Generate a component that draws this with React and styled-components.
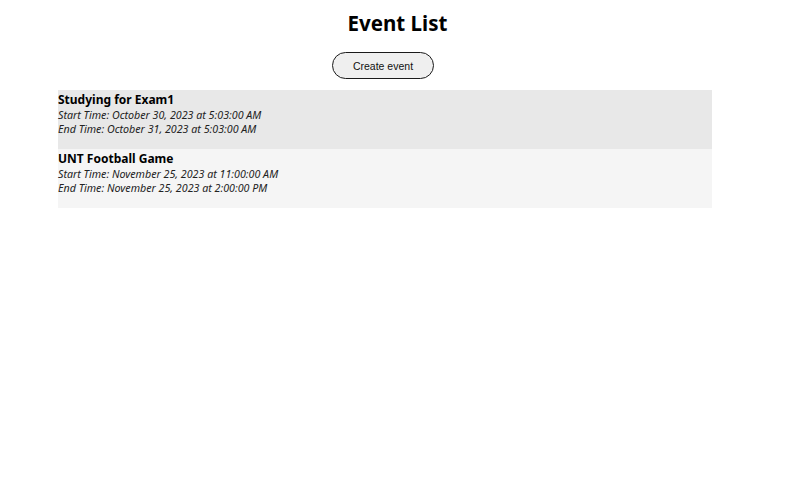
import React from "react";
import styled, { createGlobalStyle } from "styled-components";

const Global = createGlobalStyle`
  body { margin: 0; background: #fff; font-family: "Noto Sans", "Open Sans", sans-serif; color: #000; }
`;

const Page = styled.div`
  display: flex;
  flex-direction: column;
  align-items: center;
  padding-top: 9px;
`;

const Title = styled.h1`
  margin: 0 11px 0 0;
  font-size: 20.5px;
  font-weight: 700;
  line-height: 29px;
`;

const Button = styled.button`
  margin: 14px 40px 0 0;
  width: 102px;
  height: 27px;
  border: 1.5px solid #1a1a1a;
  border-radius: 14px;
  background: #efefef;
  font-family: "Liberation Sans", Arial, sans-serif;
  font-size: 10.5px;
  color: #111;
`;

const List = styled.div`
  align-self: flex-start;
  margin: 11px 0 0 58px;
  width: 654px;
  display: flex;
  flex-direction: column;
`;

const Row = styled.div`
  background: ${p => (p.$alt ? "#f5f5f5" : "#e8e8e8")};
  height: 59px;
  box-sizing: border-box;
  padding-top: 2px;
`;

const Name = styled.div`
  font-weight: 700;
  font-size: 12px;
  line-height: 16px;
`;

const Time = styled.div`
  font-style: italic;
  font-size: 10.7px;
  line-height: 14px;
  color: #222;
`;

const events = [
  { name: "Studying for Exam1", start: "October 30, 2023 at 5:03:00 AM", end: "October 31, 2023 at 5:03:00 AM" },
  { name: "UNT Football Game", start: "November 25, 2023 at 11:00:00 AM", end: "November 25, 2023 at 2:00:00 PM" },
];

export default function App() {
  return (
    <>
      <Global />
      <Page>
        <Title>Event List</Title>
        <Button>Create event</Button>
        <List>
          {events.map((e, i) => (
            <Row key={i} $alt={i % 2 === 1}>
              <Name>{e.name}</Name>
              <Time>Start Time: {e.start}</Time>
              <Time>End Time: {e.end}</Time>
            </Row>
          ))}
        </List>
      </Page>
    </>
  );
}
